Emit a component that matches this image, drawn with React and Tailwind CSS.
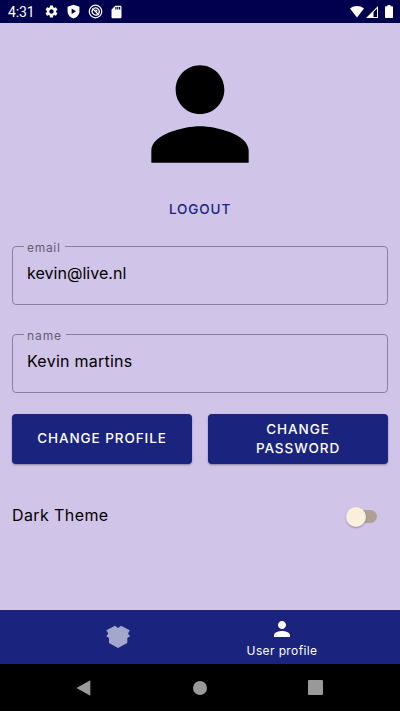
import React from 'react';
import { MdSettings, MdSdCard, MdPerson } from 'react-icons/md';

function StatusBar() {
  return (
    <header className="flex h-[23px] shrink-0 items-center bg-[#00004f] pl-2 text-white">
      <span className="w-[36px] font-['Roboto'] text-[14px] leading-[23px] tracking-[-0.1px] pt-[2px]">4:31</span>
      <div className="flex items-center">
        <MdSettings className="size-[15px]" />
        <svg viewBox="0 0 24 24" className="ml-[7px] size-[15px]" fill="currentColor">
          <path fillRule="evenodd" d="M12 1 2.500 4.500v7c0 5.300 4 10.200 9.500 11.500 5.500-1.300 9.500-6.200 9.500-11.500v-7zM9 7v9l7-4.500z" />
        </svg>
        <svg viewBox="0 0 24 24" className="ml-[7px] size-[15px]" fill="none" stroke="currentColor" strokeWidth="2">
          <circle cx="12" cy="12" r="10" />
          <path d="M7.500 8.500a6 6 0 0 0 8 8.500M9 7a6 6 0 0 1 8 8.500M7 7l10.500 10.500M12 9.500a3 3 0 0 1 2.500 2.500" />
        </svg>
        <MdSdCard className="ml-[6px] h-4 w-[15px]" />
      </div>
      <div className="ml-auto flex items-center pr-[7px]">
        <svg viewBox="0 0 14 12" className="h-3 w-[14px]" fill="currentColor">
          <path d="M0 2.500C4-.8 10-.8 14 2.500L7 11.500z" />
        </svg>
        <svg viewBox="0 0 12 12" className="ml-[2px] h-3 w-3" fill="currentColor">
          <path fillRule="evenodd" d="M12 0v12H0zM11 2.400 7.500 5.900V11H11z" />
        </svg>
        <svg viewBox="0 0 8 13" className="ml-[7px] h-[13px] w-2" fill="currentColor">
          <path d="M2.500 0h3v1.300H7.300q.7 0 .7.700v10.300q0 .7-.7.7H.7q-.7 0-.7-.7V2q0-.7.7-.7h1.800z" />
        </svg>
      </div>
    </header>
  );
}

function OutlinedField({ label, labelClass, value, valueClass }) {
  return (
    <fieldset className="h-[63px] rounded-[4px] border border-[#8b809c] pl-[11px]">
      <legend className="h-2 pl-[3px] pr-1">
        <span className={`block pt-px text-[12px] leading-[10px] text-[#665d75] ${labelClass}`}>{label}</span>
      </legend>
      <div className={`pl-[3px] pt-[11px] text-[16px] leading-6 text-black ${valueClass}`}>{value}</div>
    </fieldset>
  );
}

function Button({ children }) {
  return (
    <button className="flex h-[50px] flex-1 items-center justify-center rounded-[4px] bg-[#1a237e] pb-px text-center text-[13.500px] font-medium leading-[19px] tracking-[0.920px] text-white shadow-[0_1px_2px_rgba(0,0,0,0.35)]">
      {children}
    </button>
  );
}

export default function App() {
  return (
    <div className="flex h-[711px] w-[400px] flex-col overflow-hidden bg-[#d1c4e9] font-['Inter',sans-serif]">
      <StatusBar />
      <main className="flex flex-1 flex-col px-3 pt-[18px]">
        <MdPerson className="size-[146px] self-center text-black" />
        <button className="mt-[12px] self-center text-[13.500px] font-medium leading-5 tracking-[0.900px] text-[#1a237e]">LOGOUT</button>
        <div className="mt-[23px] flex flex-col gap-[25px]">
          <OutlinedField label="email" labelClass="tracking-[0.700px]" value="kevin@live.nl" valueClass="tracking-[0.040px]" />
          <OutlinedField label="name" labelClass="tracking-[0.900px]" value="Kevin martins" valueClass="tracking-[0.250px]" />
        </div>
        <div className="mt-[21px] flex gap-4">
          <Button>CHANGE PROFILE</Button>
          <Button>CHANGE<br />PASSWORD</Button>
        </div>
        <div className="mt-[39px] flex h-6 items-center justify-between">
          <span className="text-[16px] tracking-[0.400px]">Dark Theme</span>
          <div className="mr-[11px] mt-[3px] flex h-[13px] w-[29px] items-center rounded-full bg-[#aca194]">
            <div className="-ml-[2px] size-5 shrink-0 rounded-full bg-[#faefdc] shadow-[0_1px_2px_rgba(0,0,0,0.3)]" />
          </div>
        </div>
      </main>
      <nav className="flex h-[54px] shrink-0 bg-[#1a237e] px-9">
        <div className="flex flex-1 items-center justify-center">
          <svg viewBox="0 0 24 24" className="h-6 w-6 text-[#a3a7cb]" fill="currentColor">
            <path d="M9 .8 12 3l3-2.200 8.800 4.400-1.800 3.300 2 2.700-2.700 1.800v5L12 23l-9-5v-5L.3 11.200l2-2.700L.3 5.200z" />
          </svg>
        </div>
        <div className="flex flex-1 flex-col items-center pt-[7px] text-white">
          <MdPerson className="size-6" />
          <span className="pt-px text-[12px] leading-[18px] tracking-[0.380px]">User profile</span>
        </div>
      </nav>
      <footer className="flex h-[47px] shrink-0 items-center justify-between bg-black pl-[76px] pr-[77px] text-[#999]">
        <svg viewBox="0 0 15 16" className="h-4 w-[15px]" fill="currentColor"><path d="M14.300.2v15.600L.5 8z" /></svg>
        <div className="size-[14px] rounded-full bg-[#999]" />
        <div className="size-[15px] rounded-[1px] bg-[#999]" />
      </footer>
    </div>
  );
}
